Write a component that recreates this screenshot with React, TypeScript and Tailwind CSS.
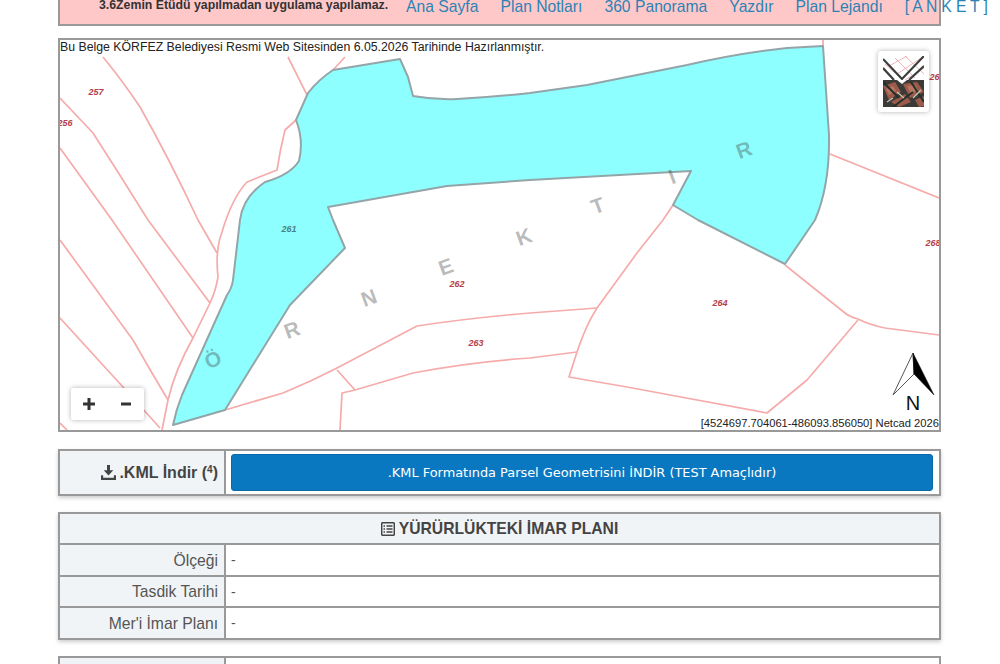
const font = { fontFamily: '"Liberation Sans", Arial, sans-serif' };

const cyanArea =
  'M333 70 L400 59 L408 77 L413 96 Q435 100 457 99 Q495 97 530 93 L587 85 L687 65 Q740 53 787 48 L823 46 Q826 90 829 135 Q830 185 815 220 L785 264 L698 220 L673 205 L691 171 L530 180 L447 186 L328 207 L333 220 L345 248 L290 305 L225 410 L173 425 Q176 410 182 395 L227 295 Q232 288 233 280 L240 220 Q243 197 265 182 Q290 175 299 161 Q304 140 296 120 L308 93 Q318 80 333 70 Z';

const parcelLines = [
  'M103 57 Q122 80 140 107 Q170 160 198 220 L217 253',
  'M60 98 Q76 115 93 133 Q120 175 148 220 L210 303',
  'M60 148 L112 220 L193 338',
  'M60 240 L133 340 Q150 370 168 400',
  'M60 318 L123 387 L160 428',
  'M60 423 L67 430',
  'M296 120 L285 130 Q280 150 277 170 Q262 176 247 182 Q232 198 222 232 Q215 250 218 277 Q216 290 210 303 L193 338 Q175 370 168 400 L162 430',
  'M288 57 L307 95',
  'M345 57 L333 70',
  'M225 410 L283 393 Q310 382 337 368 L417 326 Q470 318 530 313 L597 308',
  'M337 370 L355 390',
  'M340 430 L342 393 L355 390 L413 373 Q470 362 530 358 L577 352',
  'M673 205 L663 220 L637 253 L597 308 Q586 325 577 352 L569 377 L627 387 L767 413 L807 380 L858 320',
  'M785 265 L845 313 Q850 317 858 319 Q870 325 885 328 L939 335',
  'M830 154 L939 198',
  'M823 40 L823 46',
];

const parcelNumbers = [
  { t: '257', x: 96, y: 95 },
  { t: '256', x: 65, y: 126 },
  { t: '261', x: 289, y: 232 },
  { t: '262', x: 457, y: 287 },
  { t: '263', x: 476, y: 346 },
  { t: '264', x: 720, y: 306 },
  { t: '268', x: 933, y: 246 },
  { t: '268', x: 937, y: 80 },
];

const streetLetters = [
  { t: 'Ö', x: 213, y: 367 },
  { t: 'R', x: 292, y: 337 },
  { t: 'N', x: 369, y: 305 },
  { t: 'E', x: 446, y: 274 },
  { t: 'K', x: 524, y: 244 },
  { t: 'T', x: 598, y: 213 },
  { t: 'I', x: 672, y: 184 },
  { t: 'R', x: 744, y: 157 },
];

function MapDrawing() {
  return (
    <svg viewBox="60 40 879 390" className="block w-full h-full" style={font}>
      <path d={cyanArea} fill="#8effff" />
      <g fill="none" stroke="#f6abab" strokeWidth="1.7" strokeLinejoin="round">
        {parcelLines.map((d, i) => (
          <path key={i} d={d} />
        ))}
      </g>
      <path d={cyanArea} fill="none" stroke="#93a5a8" strokeWidth="2" strokeLinejoin="round" />
      {parcelNumbers.map((n, i) => (
        <text key={i} x={n.x} y={n.y} textAnchor="middle" fontSize="9" fontWeight="700" fontStyle="italic" fill={n.t === '261' ? '#4a7f85' : '#b5404c'}>
          {n.t}
        </text>
      ))}
      {streetLetters.map((l, i) => (
        <text
          key={i}
          x={l.x}
          y={l.y}
          textAnchor="middle"
          fontSize="21"
          fontWeight="700"
          fill="#3a3a3a"
          fillOpacity="0.36"
          transform={`rotate(-20 ${l.x} ${l.y - 7})`}
        >
          {l.t}
        </text>
      ))}
      <path d="M913 353 L893 395 L914 374 Z" fill="#fff" stroke="#555" strokeWidth="1" />
      <path d="M913 353 L934 395 L914 374 Z" fill="#000" stroke="#000" strokeWidth="0.5" />
      <text x="913" y="410" textAnchor="middle" fontSize="20" fill="#111">
        N
      </text>
    </svg>
  );
}

function LayerThumb() {
  return (
    <div className="absolute top-[11px] right-[10px] w-[51px] h-[61px] bg-white rounded-[3px] shadow-[0_0_5px_rgba(0,0,0,0.3)] p-[5px]">
      <svg viewBox="0 0 41 51" className="block w-full h-full">
        <rect width="41" height="51" fill="#fff" />
        <path d="M6 10 L24 0 M14 18 L38 2 M22 24 L41 12 M12 2 L32 22 M22 0 L41 18 M2 8 L20 24" fill="none" stroke="#f2b4ba" strokeWidth="1" />
        <rect y="24" width="41" height="27" fill="#3b3a36" />
        <path d="M0 30 L12 26 L18 36 L6 44 Z M20 28 L34 26 L41 36 L27 42 Z M8 46 L22 38 L28 46 L16 51 Z M32 44 L41 40 V50 L36 51 Z" fill="#9c5a4a" />
        <path d="M3 33 L10 30 L13 35 L6 39 Z M24 30 L32 29 L35 34 L28 38 Z" fill="#b87562" />
        <path d="M10 51 L30 36 M0 26 L16 42 M28 26 L41 46" fill="none" stroke="#22302b" strokeWidth="2" />
        <path d="M14 36 L21 42 M30 42 L38 34 M4 46 L10 42" fill="none" stroke="#c9c7bb" strokeWidth="1.2" />
        <path d="M0 3 L19 23 L41 0 M0 12 L11 24 M26 24 L41 10" fill="none" stroke="#3a3f3c" strokeWidth="2.2" />
        <path d="M14 24 L19 28 L24 24 Z" fill="#fff" />
      </svg>
    </div>
  );
}

function ZoomButtons() {
  return (
    <div className="absolute left-[11px] bottom-[10px] w-[73px] h-[32px] bg-white rounded-[2px] shadow-[0_0_5px_rgba(0,0,0,0.3)] flex items-center">
      <svg viewBox="0 0 12 12" className="w-[12px] h-[12px] ml-[12px]">
        <path d="M6 0 V12 M0 6 H12" stroke="#333" strokeWidth="3" />
      </svg>
      <svg viewBox="0 0 10 4" className="w-[10px] h-[4px] ml-[26px]">
        <rect width="10" height="3" y="0.5" fill="#333" />
      </svg>
    </div>
  );
}

function DownloadIcon() {
  return (
    <svg viewBox="0 0 14 14" className="w-[15px] h-[15px] text-[#444]" fill="currentColor">
      <path d="M5.6 0 H8.4 V5 H11.5 L7 9.8 L2.5 5 H5.6 Z" />
      <path d="M0 9.5 H2 V11.8 H12 V9.5 H14 V14 H0 Z" />
    </svg>
  );
}

function ListIcon() {
  return (
    <svg viewBox="0 0 14 14" className="w-[14px] h-[14px]" fill="none" stroke="#444" strokeWidth="1.5">
      <rect x="0.7" y="0.7" width="12.6" height="12.6" rx="1" />
      <path d="M2.5 4 H4 M5.5 4 H11.5 M2.5 7 H4 M5.5 7 H11.5 M2.5 10 H4 M5.5 10 H11.5" />
    </svg>
  );
}

const planRows = ["Ölçeği", 'Tasdik Tarihi', "Mer'i İmar Planı"];
const links = ['Ana Sayfa', 'Plan Notları', '360 Panorama', 'Yazdır', 'Plan Lejandı'];

export default function App() {
  return (
    <div className="h-[664px] overflow-hidden bg-white text-[#444]" style={font}>
      <div className="ml-[58px] w-[883px]">
        <div className="h-[26px] bg-[#ffc8c8] border-x-2 border-b-2 border-[#999] pl-[39px] flex items-start gap-[18px] whitespace-nowrap">
          <span className="text-[12.3px] leading-[12px] font-bold text-[#333] -mt-[1px]">
            3.6Zemin Etüdü yapılmadan uygulama yapılamaz.
          </span>
          <div className="flex gap-[22px] text-[15.7px] leading-[17px] text-[#2b83b5] -mt-[2px]">
            {links.map((l) => (
              <span key={l}>{l}</span>
            ))}
            <span className="-tracking-[0.15px]">[ A N K E T ]</span>
          </div>
        </div>

        <div className="relative mt-[12px] h-[394px] border-2 border-[#999] bg-white">
          <MapDrawing />
          <div className="absolute left-0 top-0 text-[12.3px] leading-[14px] text-[#222] whitespace-nowrap">
            Bu Belge KÖRFEZ Belediyesi Resmi Web Sitesinden 6.05.2026 Tarihinde Hazırlanmıştır.
          </div>
          <div className="absolute right-0 bottom-0 text-[11.2px] leading-[14px] text-[#222] whitespace-nowrap">
            [4524697.704061-486093.856050] Netcad 2026
          </div>
          <LayerThumb />
          <ZoomButtons />
        </div>

        <div className="mt-[17px] h-[47px] border-2 border-[#999] shadow-[0_2px_4px_rgba(0,0,0,0.2)] flex bg-white">
          <div className="w-[166px] shrink-0 bg-[#f1f4f6] border-r-2 border-[#999] flex items-center justify-end gap-[3px] pr-[6px] text-[16px] font-bold">
            <DownloadIcon />
            <span>
              .KML İndir (<sup className="text-[10px]">4</sup>)
            </span>
          </div>
          <div className="flex-1 pl-[5px] pr-[6px] py-[3px] flex">
            <div
              className="flex-1 bg-[#0a78c0] rounded-[3px] border border-[#0a6aa8] text-white text-[12.9px] flex items-center justify-center"
              style={{ fontFamily: '"DejaVu Sans", Verdana, sans-serif' }}
            >
              .KML Formatında Parsel Geometrisini İNDİR (TEST Amaçlıdır)
            </div>
          </div>
        </div>

        <div className="mt-[16px] border-2 border-[#999] shadow-[0_2px_4px_rgba(0,0,0,0.2)] bg-white">
          <div className="h-[29px] bg-[#f1f4f6] flex items-center justify-center gap-[4px] text-[15.7px] font-bold">
            <ListIcon />
            <span>YÜRÜRLÜKTEKİ İMAR PLANI</span>
          </div>
          {planRows.map((r) => (
            <div key={r} className="h-[31.5px] border-t-2 border-[#999] flex text-[15.7px] text-[#555]">
              <div className="w-[166px] shrink-0 bg-[#f1f4f6] border-r-2 border-[#999] flex items-center justify-end pr-[6px] pt-[2px]">
                {r}
              </div>
              <div className="flex-1 flex items-center pl-[5px] pt-[2px] text-[14px]">-</div>
            </div>
          ))}
        </div>

        <div className="mt-[16.5px] h-[40px] border-2 border-[#999] flex">
          <div className="w-[166px] shrink-0 bg-[#f1f4f6] border-r-2 border-[#999]" />
        </div>
      </div>
    </div>
  );
}
